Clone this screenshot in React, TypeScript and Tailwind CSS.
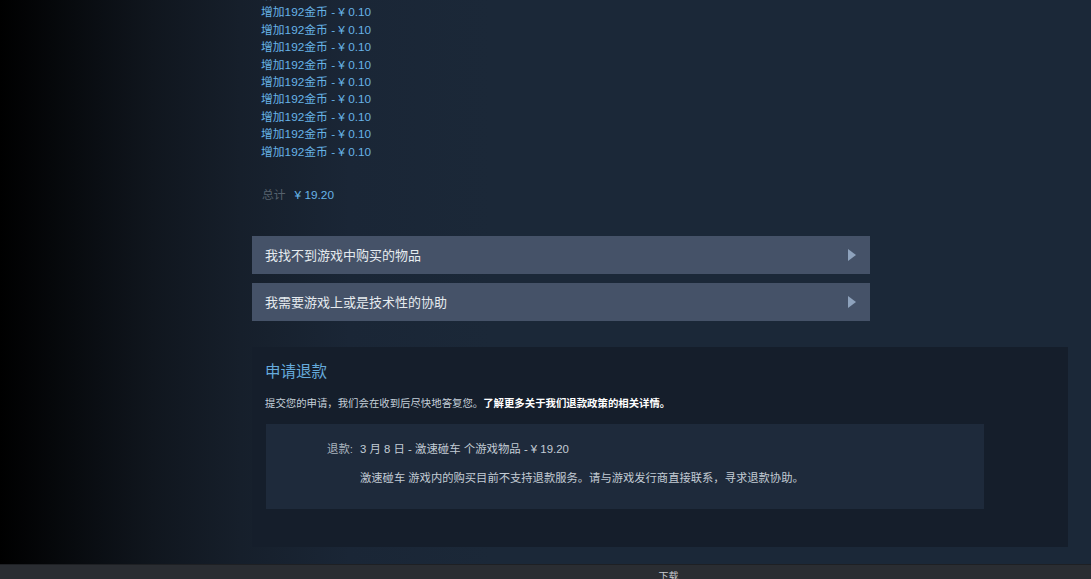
const font = { fontFamily: '"Liberation Sans", "Noto Sans CJK SC", sans-serif' };

function ArrowRight() {
  return (
    <svg width="8" height="12" viewBox="0 0 8 12" className="shrink-0">
      <path d="M0 0 L8 6 L0 12 Z" fill="#8ea2bc" />
    </svg>
  );
}

function HelpButton({ label }: { label: string }) {
  return (
    <div className="flex h-[38px] w-[618px] items-center justify-between bg-[#455268] pl-[13px] pr-[14px]">
      <span className="text-[13px] leading-none text-[#e6ebef]">{label}</span>
      <ArrowRight />
    </div>
  );
}

export default function App() {
  const items = Array.from({ length: 10 });

  return (
    <div
      className="flex h-[579px] w-full flex-col overflow-hidden bg-[#1b2838]"
      style={font}
    >
      <div className="flex-1 overflow-hidden bg-[linear-gradient(to_right,#000000_0%,#080b0f_7%,#10161e_14%,#161f2b_22%,#1a2636_32%,#1b2838_45%)]">
        <div className="ml-[252px] w-[816px]">
          {/* Line items */}
          <div className="-mt-[13px] pl-[9px]">
            {items.map((_, i) => (
              <div key={i} className="text-[11.8px] leading-[17.4px] text-[#67b3e6]">
                增加192金币 - ¥ 0.10
              </div>
            ))}
          </div>

          {/* Total */}
          <div className="mt-[26px] flex items-center gap-[9px] pl-[10px] text-[11.8px] leading-[17px]">
            <span className="text-[#56616d]">总计</span>
            <span className="text-[#67b3e6]">¥ 19.20</span>
          </div>

          {/* Help options */}
          <div className="mt-[32px] flex flex-col gap-[9px]">
            <HelpButton label="我找不到游戏中购买的物品" />
            <HelpButton label="我需要游戏上或是技术性的协助" />
          </div>

          {/* Refund panel */}
          <div className="mt-[26px] h-[200px] bg-[#151e2b] pl-[13px] pt-[15px]">
            <h2 className="text-[15.5px] leading-[20px] text-[#66abdc]">申请退款</h2>
            <p className="mt-[15px] text-[10.4px] leading-[14px] text-[#c5d0da]">
              提交您的申请，我们会在收到后尽快地答复您。
              <span className="font-bold text-white">了解更多关于我们退款政策的相关详情。</span>
            </p>

            <div className="ml-px mt-[13px] h-[85px] w-[718px] bg-[#1e2a3b] pt-[17px]">
              <div className="flex text-[11.4px] leading-[16px]">
                <span className="w-[94px] pr-[7px] text-right text-[#aab4bf]">退款:</span>
                <span className="text-[#c3ccd5]">3 月 8 日 - 激速碰车 个游戏物品 - ¥ 19.20</span>
              </div>
              <p className="mt-[13px] pl-[94px] text-[11.3px] leading-[16px] text-[#c3ccd5]">
                激速碰车 游戏内的购买目前不支持退款服务。请与游戏发行商直接联系，寻求退款协助。
              </p>
            </div>
          </div>
        </div>
      </div>

      {/* Bottom bar */}
      <div className="flex h-[15px] shrink-0 justify-center overflow-hidden border-t border-[#1e2024] bg-[#2a2d32]">
        <span className="ml-[246px] pt-[6px] text-[10px] leading-[12px] text-[#c9ccd1]">下载</span>
      </div>
    </div>
  );
}
